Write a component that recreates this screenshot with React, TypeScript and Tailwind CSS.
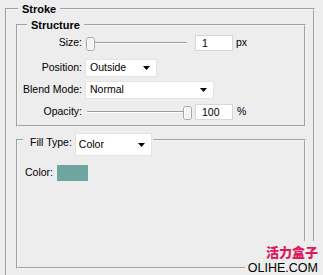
import React from "react";

function Thumb() {
  return (
    <svg width="9" height="14" viewBox="0 0 9 14">
      <rect x="0.5" y="0.5" width="8" height="13" rx="2.5" fill="#f4f4f4" stroke="#a6a6a6" />
      <rect x="1.5" y="1.5" width="6" height="11" rx="1.5" fill="none" stroke="#ffffff" />
    </svg>
  );
}

function Arrow() {
  return (
    <svg width="7" height="4" viewBox="0 0 7 4">
      <polygon points="0,0 7,0 3.5,4" fill="#000000" />
    </svg>
  );
}

function Slider({ end }: { end: boolean }) {
  return (
    <div className="relative flex h-[18px] w-[104px] items-center">
      <div className="mx-[2px] h-[2px] flex-1 border-t border-[#9c9c9c] bg-white" />
      {end ? (
        <div className="absolute left-[98px] top-[3px] flex">
          <Thumb />
        </div>
      ) : (
        <div className="absolute left-[1px] top-[3px] flex">
          <Thumb />
        </div>
      )}
    </div>
  );
}

function NumBox({ value }: { value: string }) {
  return (
    <div className="ml-[6px] flex h-[16px] w-[38px] items-center border border-[#d6d6d6] bg-white pl-[6px] leading-none">
      {value}
    </div>
  );
}

export default function App() {
  return (
    <div className="relative h-[275px] w-[323px] overflow-hidden bg-[#ededed] pl-[5px] pt-[2px] font-['Liberation_Sans',Arial,sans-serif] text-[10.5px] text-black">
      <fieldset className="h-[290px] w-[310px] border-2 border-[#f4f4f4] [--tw-border-style:groove]">
        <legend className="ml-[11px] px-[4px] text-[11px] font-bold leading-[14px]">Stroke</legend>

        <fieldset className="ml-[9px] mt-[2px] h-[109px] w-[290px] border-2 border-[#f4f4f4] [--tw-border-style:groove]">
          <legend className="ml-[9px] px-[4px] text-[11px] font-bold leading-[14px]">Structure</legend>
          <div className="flex flex-col pt-[2px]">
            <div className="flex h-[18px] items-center">
              <div className="w-[64px] text-right">Size:</div>
              <div className="ml-[3px] flex items-center">
                <Slider end={false} />
                <NumBox value="1" />
                <span className="ml-[3px]">px</span>
              </div>
            </div>

            <div className="mt-[7px] flex h-[18px] items-center">
              <div className="w-[64px] text-right">Position:</div>
              <div className="ml-[3px] flex h-[18px] w-[72px] items-center justify-between border border-[#e4e4e4] bg-white pl-[4px] pr-[6px]">
                <span>Outside</span>
                <Arrow />
              </div>
            </div>

            <div className="mt-[4px] flex h-[18px] items-center">
              <div className="w-[64px] text-right">Blend Mode:</div>
              <div className="ml-[3px] flex h-[18px] w-[129px] items-center justify-between border border-[#e4e4e4] bg-white pl-[4px] pr-[6px]">
                <span>Normal</span>
                <Arrow />
              </div>
            </div>

            <div className="mt-[4px] flex h-[18px] items-center">
              <div className="w-[64px] text-right">Opacity:</div>
              <div className="ml-[3px] flex items-center">
                <Slider end={true} />
                <NumBox value="100" />
                <span className="ml-[4px]">%</span>
              </div>
            </div>
          </div>
        </fieldset>

        <fieldset className="ml-[9px] mt-[5px] h-[137px] w-[290px] border-2 border-[#f4f4f4] [--tw-border-style:groove]">
          <legend className="ml-[5px] h-[16px] pl-[7px] pr-[1px]">
            <div className="mt-[1px] flex h-[23px] items-center">
              <span className="mb-[3px]">Fill Type:</span>
              <div className="ml-[3px] flex h-[23px] w-[77px] items-center justify-between border border-[#e4e4e4] bg-white pl-[3px] pr-[6px]">
                <span>Color</span>
                <Arrow />
              </div>
            </div>
          </legend>
          <div className="mt-[17px] flex items-center pl-[7px]">
            <span>Color:</span>
            <div className="ml-[4px] h-[16px] w-[31px] bg-[#6ea59e]" />
          </div>
        </fieldset>
      </fieldset>

      <div className="absolute bottom-0 right-0 flex flex-col items-end bg-[#ededed] pl-[3px] pr-[5px] pt-[1px]">
        <span className="font-['Noto_Sans_CJK_SC',sans-serif] text-[13px] font-black leading-[19px] text-[#e0185b]">
          活力盒子
        </span>
        <span className="font-['Liberation_Sans',Arial,sans-serif] text-[12.5px] leading-[14px] text-black">
          OLIHE.COM
        </span>
      </div>
    </div>
  );
}
